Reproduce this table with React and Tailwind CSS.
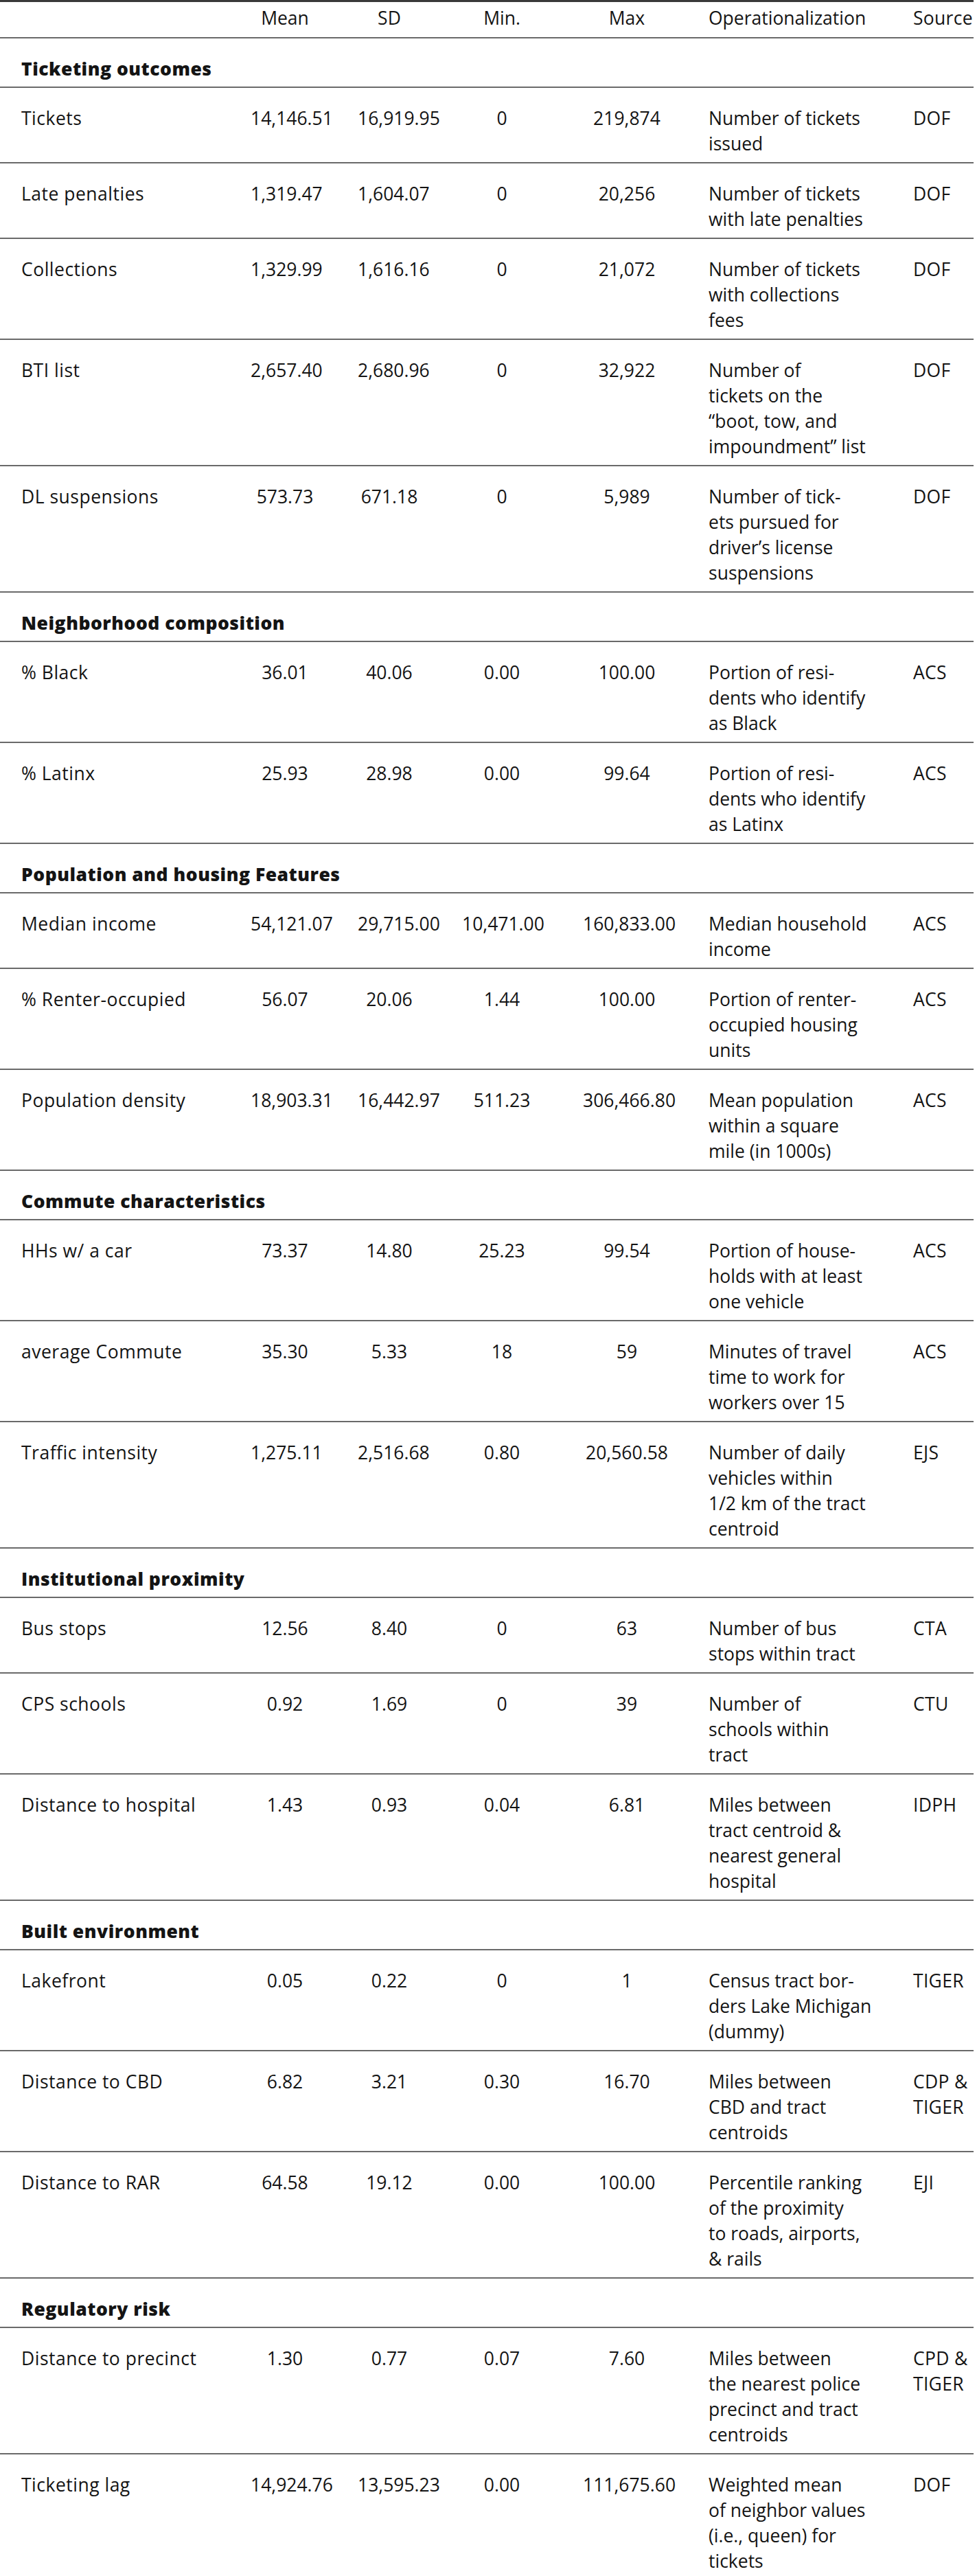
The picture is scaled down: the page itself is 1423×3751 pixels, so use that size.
import React from "react";

const sections = [
  {
    title: "Ticketing outcomes",
    rows: [
      ["Tickets", "14,146.51", "16,919.95", "0", "219,874", ["Number of tickets", "issued"], ["DOF"]],
      ["Late penalties", "1,319.47", "1,604.07", "0", "20,256", ["Number of tickets", "with late penalties"], ["DOF"]],
      ["Collections", "1,329.99", "1,616.16", "0", "21,072", ["Number of tickets", "with collections", "fees"], ["DOF"]],
      ["BTI list", "2,657.40", "2,680.96", "0", "32,922", ["Number of", "tickets on the", "\u201Cboot, tow, and", "impoundment\u201D list"], ["DOF"]],
      ["DL suspensions", "573.73", "671.18", "0", "5,989", ["Number of tick-", "ets pursued for", "driver\u2019s license", "suspensions"], ["DOF"]],
    ],
  },
  {
    title: "Neighborhood composition",
    rows: [
      ["% Black", "36.01", "40.06", "0.00", "100.00", ["Portion of resi-", "dents who identify", "as Black"], ["ACS"]],
      ["% Latinx", "25.93", "28.98", "0.00", "99.64", ["Portion of resi-", "dents who identify", "as Latinx"], ["ACS"]],
    ],
  },
  {
    title: "Population and housing Features",
    rows: [
      ["Median income", "54,121.07", "29,715.00", "10,471.00", "160,833.00", ["Median household", "income"], ["ACS"]],
      ["% Renter-occupied", "56.07", "20.06", "1.44", "100.00", ["Portion of renter-", "occupied housing", "units"], ["ACS"]],
      ["Population density", "18,903.31", "16,442.97", "511.23", "306,466.80", ["Mean population", "within a square", "mile (in 1000s)"], ["ACS"]],
    ],
  },
  {
    title: "Commute characteristics",
    rows: [
      ["HHs w/ a car", "73.37", "14.80", "25.23", "99.54", ["Portion of house-", "holds with at least", "one vehicle"], ["ACS"]],
      ["average Commute", "35.30", "5.33", "18", "59", ["Minutes of travel", "time to work for", "workers over 15"], ["ACS"]],
      ["Traffic intensity", "1,275.11", "2,516.68", "0.80", "20,560.58", ["Number of daily", "vehicles within", "1/2 km of the tract", "centroid"], ["EJS"]],
    ],
  },
  {
    title: "Institutional proximity",
    rows: [
      ["Bus stops", "12.56", "8.40", "0", "63", ["Number of bus", "stops within tract"], ["CTA"]],
      ["CPS schools", "0.92", "1.69", "0", "39", ["Number of", "schools within", "tract"], ["CTU"]],
      ["Distance to hospital", "1.43", "0.93", "0.04", "6.81", ["Miles between", "tract centroid &", "nearest general", "hospital"], ["IDPH"]],
    ],
  },
  {
    title: "Built environment",
    rows: [
      ["Lakefront", "0.05", "0.22", "0", "1", ["Census tract bor-", "ders Lake Michigan", "(dummy)"], ["TIGER"]],
      ["Distance to CBD", "6.82", "3.21", "0.30", "16.70", ["Miles between", "CBD and tract", "centroids"], ["CDP &", "TIGER"]],
      ["Distance to RAR", "64.58", "19.12", "0.00", "100.00", ["Percentile ranking", "of the proximity", "to roads, airports,", "& rails"], ["EJI"]],
    ],
  },
  {
    title: "Regulatory risk",
    rows: [
      ["Distance to precinct", "1.30", "0.77", "0.07", "7.60", ["Miles between", "the nearest police", "precinct and tract", "centroids"], ["CPD &", "TIGER"]],
      ["Ticketing lag", "14,924.76", "13,595.23", "0.00", "111,675.60", ["Weighted mean", "of neighbor values", "(i.e., queen) for", "tickets"], ["DOF"]],
    ],
  },
];

function Lines({ lines }) {
  return (
    <>
      {lines.map((l, i) => (
        <div key={i} className="whitespace-nowrap">
          {l}
        </div>
      ))}
    </>
  );
}

function Cells({ label, mean, sd, min, max, op, src }) {
  return (
    <>
      <div className="w-[334px] shrink-0 whitespace-nowrap tracking-[0.5px]">{label}</div>
      <div className="w-[100px] shrink-0 whitespace-nowrap text-center">{mean}</div>
      <div className="ml-[56px] w-[92px] shrink-0 whitespace-nowrap text-center">{sd}</div>
      <div className="ml-[60px] w-[116px] shrink-0 whitespace-nowrap text-center">{min}</div>
      <div className="ml-[60px] w-[128px] shrink-0 whitespace-nowrap text-center">{max}</div>
      <div className="ml-[55px] w-[270px] shrink-0">{op}</div>
      <div className="ml-[28px] w-[88px] shrink-0 tracking-[0.3px]">{src}</div>
    </>
  );
}

export default function App() {
  return (
    <div className="w-[1423px] bg-white text-[#141414] font-['Open_Sans','Lato','Liberation_Sans',sans-serif] text-[26.5px] leading-[37px] overflow-hidden">
      <div className="w-[1418px] border-t-[3px] border-b-[3px] border-[#3a3a3a]">
        <div className="flex pl-[31px] pt-[5px] pb-[9px] border-b-2 border-[#6a6a6a]">
          <Cells label="" mean="Mean" sd="SD" min="Min." max="Max" op="Operationalization" src="Source" />
        </div>
        {sections.map((s, si) => (
          <React.Fragment key={si}>
            <div className="pl-[31px] pt-[26px] pb-[7px] border-b-2 border-[#6a6a6a] font-extrabold tracking-[0.5px] whitespace-nowrap">
              {s.title}
            </div>
            {s.rows.map((r, ri) => {
              const last = si === sections.length - 1 && ri === s.rows.length - 1;
              return (
                <div
                  key={ri}
                  className={
                    last
                      ? "flex pl-[31px] pt-[26px] pb-[8px]"
                      : "flex pl-[31px] pt-[26px] pb-[8px] border-b-2 border-[#6a6a6a]"
                  }
                >
                  <Cells
                    label={r[0]}
                    mean={r[1]}
                    sd={r[2]}
                    min={r[3]}
                    max={r[4]}
                    op={<Lines lines={r[5]} />}
                    src={<Lines lines={r[6]} />}
                  />
                </div>
              );
            })}
          </React.Fragment>
        ))}
      </div>
    </div>
  );
}
